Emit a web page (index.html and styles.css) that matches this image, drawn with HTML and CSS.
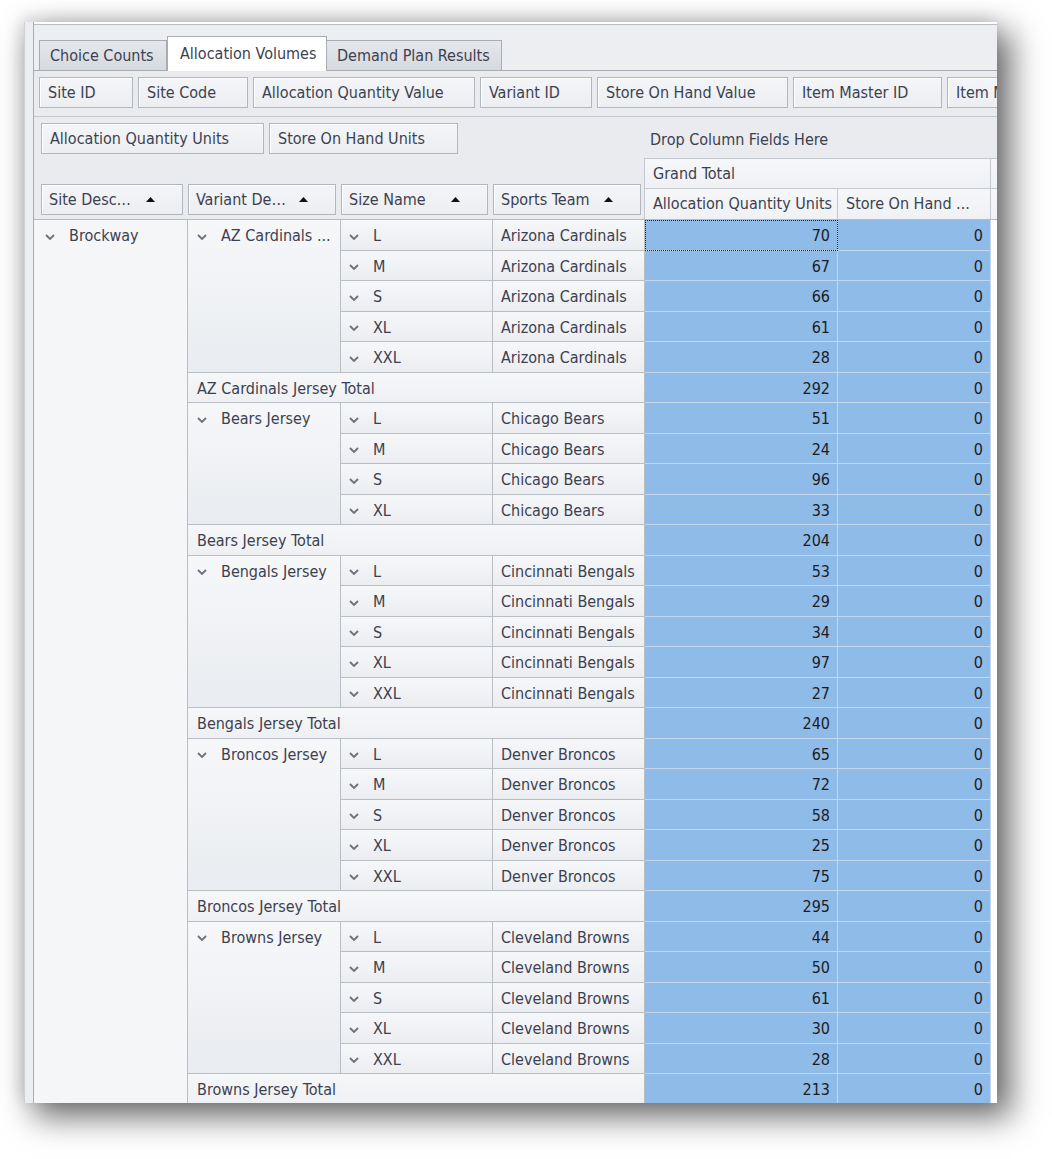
FILE: index.html
```html
<!DOCTYPE html>
<html>
<head>
<meta charset="utf-8">
<title>Allocation Volumes</title>
<link rel="stylesheet" href="styles.css">
</head>
<body>
<div class="window">
  <div class="frame">
    <div class="topbar"></div>
    <div class="tabs">
      <div class="tab t1">Choice Counts</div>
      <div class="tab active t2">Allocation Volumes</div>
      <div class="tab t3">Demand Plan Results</div>
    </div>
    <div class="panel">
      <div class="filter-row">
        <div class="field f-siteid">Site ID</div>
        <div class="field f-sitecode">Site Code</div>
        <div class="field f-aqv">Allocation Quantity Value</div>
        <div class="field f-varid">Variant ID</div>
        <div class="field f-sohv">Store On Hand Value</div>
        <div class="field f-imid">Item Master ID</div>
        <div class="field f-imn">Item Master Name</div>
      </div>
      <div class="pivot-head">
        <div class="head-left">
          <div class="data-fields">
            <div class="field f-aqu">Allocation Quantity Units</div>
            <div class="field f-sohu">Store On Hand Units</div>
          </div>
          <div class="row-fields">
            <div class="field sort f-sd"><span class="lbl">Site Desc…</span><svg class="arrow" width="9" height="5" viewBox="0 0 9 5"><path d="M0 5 L4.5 0 L9 5 Z" fill="#111"/></svg></div>
            <div class="field sort f-vd"><span class="lbl">Variant De…</span><svg class="arrow" width="9" height="5" viewBox="0 0 9 5"><path d="M0 5 L4.5 0 L9 5 Z" fill="#111"/></svg></div>
            <div class="field sort f-sn"><span class="lbl">Size Name</span><svg class="arrow" width="9" height="5" viewBox="0 0 9 5"><path d="M0 5 L4.5 0 L9 5 Z" fill="#111"/></svg></div>
            <div class="field sort f-st"><span class="lbl">Sports Team</span><svg class="arrow" width="9" height="5" viewBox="0 0 9 5"><path d="M0 5 L4.5 0 L9 5 Z" fill="#111"/></svg></div>
          </div>
        </div>
        <div class="head-right">
          <div class="drop">Drop Column Fields Here</div>
          <div class="gt-row"><div class="hcell gt">Grand Total</div><div class="hcell hrest"></div></div>
          <div class="sub-row"><div class="hcell aq">Allocation Quantity Units</div><div class="hcell soh">Store On Hand ...</div><div class="hcell hrest"></div></div>
        </div>
      </div>
      <div class="pivot-body">
        <div class="c site"><svg class="chev" width="10" height="6" viewBox="0 0 10 6"><path d="M1 1 L5 5 L9 1" fill="none" stroke="#6d717a" stroke-width="1.8"/></svg>Brockway</div>

        <div class="c var r5"><svg class="chev" width="10" height="6" viewBox="0 0 10 6"><path d="M1 1 L5 5 L9 1" fill="none" stroke="#6d717a" stroke-width="1.8"/></svg>AZ Cardinals ...</div>
        <div class="c size"><svg class="chev" width="10" height="6" viewBox="0 0 10 6"><path d="M1 1 L5 5 L9 1" fill="none" stroke="#6d717a" stroke-width="1.8"/></svg>L</div><div class="c team">Arizona Cardinals</div><div class="v focus">70</div><div class="v v2">0</div><div class="e"></div>
        <div class="c size"><svg class="chev" width="10" height="6" viewBox="0 0 10 6"><path d="M1 1 L5 5 L9 1" fill="none" stroke="#6d717a" stroke-width="1.8"/></svg>M</div><div class="c team">Arizona Cardinals</div><div class="v">67</div><div class="v v2">0</div><div class="e"></div>
        <div class="c size"><svg class="chev" width="10" height="6" viewBox="0 0 10 6"><path d="M1 1 L5 5 L9 1" fill="none" stroke="#6d717a" stroke-width="1.8"/></svg>S</div><div class="c team">Arizona Cardinals</div><div class="v">66</div><div class="v v2">0</div><div class="e"></div>
        <div class="c size"><svg class="chev" width="10" height="6" viewBox="0 0 10 6"><path d="M1 1 L5 5 L9 1" fill="none" stroke="#6d717a" stroke-width="1.8"/></svg>XL</div><div class="c team">Arizona Cardinals</div><div class="v">61</div><div class="v v2">0</div><div class="e"></div>
        <div class="c size"><svg class="chev" width="10" height="6" viewBox="0 0 10 6"><path d="M1 1 L5 5 L9 1" fill="none" stroke="#6d717a" stroke-width="1.8"/></svg>XXL</div><div class="c team">Arizona Cardinals</div><div class="v">28</div><div class="v v2">0</div><div class="e"></div>
        <div class="c total">AZ Cardinals Jersey Total</div><div class="v">292</div><div class="v v2">0</div><div class="e"></div>

        <div class="c var r4"><svg class="chev" width="10" height="6" viewBox="0 0 10 6"><path d="M1 1 L5 5 L9 1" fill="none" stroke="#6d717a" stroke-width="1.8"/></svg>Bears Jersey</div>
        <div class="c size"><svg class="chev" width="10" height="6" viewBox="0 0 10 6"><path d="M1 1 L5 5 L9 1" fill="none" stroke="#6d717a" stroke-width="1.8"/></svg>L</div><div class="c team">Chicago Bears</div><div class="v">51</div><div class="v v2">0</div><div class="e"></div>
        <div class="c size"><svg class="chev" width="10" height="6" viewBox="0 0 10 6"><path d="M1 1 L5 5 L9 1" fill="none" stroke="#6d717a" stroke-width="1.8"/></svg>M</div><div class="c team">Chicago Bears</div><div class="v">24</div><div class="v v2">0</div><div class="e"></div>
        <div class="c size"><svg class="chev" width="10" height="6" viewBox="0 0 10 6"><path d="M1 1 L5 5 L9 1" fill="none" stroke="#6d717a" stroke-width="1.8"/></svg>S</div><div class="c team">Chicago Bears</div><div class="v">96</div><div class="v v2">0</div><div class="e"></div>
        <div class="c size"><svg class="chev" width="10" height="6" viewBox="0 0 10 6"><path d="M1 1 L5 5 L9 1" fill="none" stroke="#6d717a" stroke-width="1.8"/></svg>XL</div><div class="c team">Chicago Bears</div><div class="v">33</div><div class="v v2">0</div><div class="e"></div>
        <div class="c total">Bears Jersey Total</div><div class="v">204</div><div class="v v2">0</div><div class="e"></div>

        <div class="c var r5"><svg class="chev" width="10" height="6" viewBox="0 0 10 6"><path d="M1 1 L5 5 L9 1" fill="none" stroke="#6d717a" stroke-width="1.8"/></svg>Bengals Jersey</div>
        <div class="c size"><svg class="chev" width="10" height="6" viewBox="0 0 10 6"><path d="M1 1 L5 5 L9 1" fill="none" stroke="#6d717a" stroke-width="1.8"/></svg>L</div><div class="c team">Cincinnati Bengals</div><div class="v">53</div><div class="v v2">0</div><div class="e"></div>
        <div class="c size"><svg class="chev" width="10" height="6" viewBox="0 0 10 6"><path d="M1 1 L5 5 L9 1" fill="none" stroke="#6d717a" stroke-width="1.8"/></svg>M</div><div class="c team">Cincinnati Bengals</div><div class="v">29</div><div class="v v2">0</div><div class="e"></div>
        <div class="c size"><svg class="chev" width="10" height="6" viewBox="0 0 10 6"><path d="M1 1 L5 5 L9 1" fill="none" stroke="#6d717a" stroke-width="1.8"/></svg>S</div><div class="c team">Cincinnati Bengals</div><div class="v">34</div><div class="v v2">0</div><div class="e"></div>
        <div class="c size"><svg class="chev" width="10" height="6" viewBox="0 0 10 6"><path d="M1 1 L5 5 L9 1" fill="none" stroke="#6d717a" stroke-width="1.8"/></svg>XL</div><div class="c team">Cincinnati Bengals</div><div class="v">97</div><div class="v v2">0</div><div class="e"></div>
        <div class="c size"><svg class="chev" width="10" height="6" viewBox="0 0 10 6"><path d="M1 1 L5 5 L9 1" fill="none" stroke="#6d717a" stroke-width="1.8"/></svg>XXL</div><div class="c team">Cincinnati Bengals</div><div class="v">27</div><div class="v v2">0</div><div class="e"></div>
        <div class="c total">Bengals Jersey Total</div><div class="v">240</div><div class="v v2">0</div><div class="e"></div>

        <div class="c var r5"><svg class="chev" width="10" height="6" viewBox="0 0 10 6"><path d="M1 1 L5 5 L9 1" fill="none" stroke="#6d717a" stroke-width="1.8"/></svg>Broncos Jersey</div>
        <div class="c size"><svg class="chev" width="10" height="6" viewBox="0 0 10 6"><path d="M1 1 L5 5 L9 1" fill="none" stroke="#6d717a" stroke-width="1.8"/></svg>L</div><div class="c team">Denver Broncos</div><div class="v">65</div><div class="v v2">0</div><div class="e"></div>
        <div class="c size"><svg class="chev" width="10" height="6" viewBox="0 0 10 6"><path d="M1 1 L5 5 L9 1" fill="none" stroke="#6d717a" stroke-width="1.8"/></svg>M</div><div class="c team">Denver Broncos</div><div class="v">72</div><div class="v v2">0</div><div class="e"></div>
        <div class="c size"><svg class="chev" width="10" height="6" viewBox="0 0 10 6"><path d="M1 1 L5 5 L9 1" fill="none" stroke="#6d717a" stroke-width="1.8"/></svg>S</div><div class="c team">Denver Broncos</div><div class="v">58</div><div class="v v2">0</div><div class="e"></div>
        <div class="c size"><svg class="chev" width="10" height="6" viewBox="0 0 10 6"><path d="M1 1 L5 5 L9 1" fill="none" stroke="#6d717a" stroke-width="1.8"/></svg>XL</div><div class="c team">Denver Broncos</div><div class="v">25</div><div class="v v2">0</div><div class="e"></div>
        <div class="c size"><svg class="chev" width="10" height="6" viewBox="0 0 10 6"><path d="M1 1 L5 5 L9 1" fill="none" stroke="#6d717a" stroke-width="1.8"/></svg>XXL</div><div class="c team">Denver Broncos</div><div class="v">75</div><div class="v v2">0</div><div class="e"></div>
        <div class="c total">Broncos Jersey Total</div><div class="v">295</div><div class="v v2">0</div><div class="e"></div>

        <div class="c var r5"><svg class="chev" width="10" height="6" viewBox="0 0 10 6"><path d="M1 1 L5 5 L9 1" fill="none" stroke="#6d717a" stroke-width="1.8"/></svg>Browns Jersey</div>
        <div class="c size"><svg class="chev" width="10" height="6" viewBox="0 0 10 6"><path d="M1 1 L5 5 L9 1" fill="none" stroke="#6d717a" stroke-width="1.8"/></svg>L</div><div class="c team">Cleveland Browns</div><div class="v">44</div><div class="v v2">0</div><div class="e"></div>
        <div class="c size"><svg class="chev" width="10" height="6" viewBox="0 0 10 6"><path d="M1 1 L5 5 L9 1" fill="none" stroke="#6d717a" stroke-width="1.8"/></svg>M</div><div class="c team">Cleveland Browns</div><div class="v">50</div><div class="v v2">0</div><div class="e"></div>
        <div class="c size"><svg class="chev" width="10" height="6" viewBox="0 0 10 6"><path d="M1 1 L5 5 L9 1" fill="none" stroke="#6d717a" stroke-width="1.8"/></svg>S</div><div class="c team">Cleveland Browns</div><div class="v">61</div><div class="v v2">0</div><div class="e"></div>
        <div class="c size"><svg class="chev" width="10" height="6" viewBox="0 0 10 6"><path d="M1 1 L5 5 L9 1" fill="none" stroke="#6d717a" stroke-width="1.8"/></svg>XL</div><div class="c team">Cleveland Browns</div><div class="v">30</div><div class="v v2">0</div><div class="e"></div>
        <div class="c size"><svg class="chev" width="10" height="6" viewBox="0 0 10 6"><path d="M1 1 L5 5 L9 1" fill="none" stroke="#6d717a" stroke-width="1.8"/></svg>XXL</div><div class="c team">Cleveland Browns</div><div class="v">28</div><div class="v v2">0</div><div class="e"></div>
        <div class="c total">Browns Jersey Total</div><div class="v">213</div><div class="v v2">0</div><div class="e"></div>
      </div>
    </div>
  </div>
</div>
</body>
</html>
```

FILE: styles.css
```css
* {
  box-sizing: border-box;
}

html, body {
  margin: 0;
  background: #ffffff;
}

body {
  height: 1159px;
  overflow: hidden;
  font-family: "DejaVu Sans Condensed", "DejaVu Sans", sans-serif;
  font-stretch: condensed;
  font-size: 16px;
  color: #3c4150;
}

.window {
  margin: 22px 0 0 24px;
  width: 973px;
  height: 1081px;
  background: #eceef2;
  border-left: 1px solid #cdd0d5;
  padding-left: 8px;
  overflow: hidden;
  box-shadow: 12px 12px 30px 2px rgba(0, 0, 0, 0.58), -4px -4px 16px rgba(0, 0, 0, 0.12);
}

.frame {
  height: 100%;
  border-left: 1px solid #a8adb4;
  display: flex;
  flex-direction: column;
}

.topbar {
  height: 3px;
  flex: none;
  background: #ffffff;
  border-bottom: 1px solid #b9bdc4;
}

.tabs {
  flex: none;
  display: flex;
  align-items: flex-end;
  height: 35px;
  margin-top: 11px;
  padding-left: 5px;
  border-bottom: 1px solid #a8adb4;
}

.tab {
  flex: none;
  height: 30px;
  border: 1px solid #a8adb4;
  border-bottom: none;
  background: linear-gradient(#e4e7eb, #d6d9de);
  padding-left: 10px;
  line-height: 30px;
  white-space: nowrap;
}

.t1 { width: 128px; }
.t2 { width: 160px; }
.t3 { width: 176px; margin-left: -1px; }

.tab.active {
  height: 35px;
  margin-bottom: -1px;
  background: #ffffff;
  padding-left: 12px;
  line-height: 34px;
  position: relative;
  z-index: 1;
}

.panel {
  flex: 1;
  background: #e9ebef;
  display: flex;
  flex-direction: column;
  min-height: 0;
}

.filter-row {
  flex: none;
  display: flex;
  gap: 5px;
  height: 46px;
  padding: 6px 0 0 5px;
  border-bottom: 1px solid #c3c7ce;
  overflow: hidden;
}

.field {
  flex: none;
  height: 31px;
  border: 1px solid #b2b6bd;
  background: linear-gradient(#f4f5f8, #eceef2);
  box-shadow: inset 1px 1px 0 #ffffff;
  padding-left: 8px;
  line-height: 30px;
  white-space: nowrap;
  overflow: hidden;
}

.f-siteid { width: 94px; }
.f-sitecode { width: 110px; }
.f-aqv { width: 222px; }
.f-varid { width: 112px; }
.f-sohv { width: 191px; }
.f-imid { width: 149px; }
.f-imn { width: 150px; }

.pivot-head {
  flex: none;
  display: flex;
  height: 102px;
}

.head-left {
  width: 610px;
  padding: 6px 0 0 7px;
}

.data-fields {
  display: flex;
  gap: 5px;
}

.f-aqu { width: 223px; }
.f-sohu { width: 189px; }

.row-fields {
  display: flex;
  gap: 5px;
  margin-top: 30px;
}

.sort {
  display: flex;
  align-items: center;
  padding-left: 7px;
}

.sort .lbl {
  flex: 1;
}

.sort .arrow {
  flex: none;
  margin-right: 27px;
}

.f-sd { width: 142px; }
.f-vd { width: 148px; }
.f-sn { width: 147px; }
.f-st { width: 148px; }

.head-right {
  width: 353px;
  display: flex;
  flex-direction: column;
}

.drop {
  height: 41px;
  line-height: 45px;
  padding-left: 6px;
  white-space: nowrap;
}

.gt-row {
  display: flex;
  height: 31px;
}

.sub-row {
  display: flex;
  height: 30px;
}

.hcell {
  border-right: 1px solid #c3c7ce;
  background: linear-gradient(#f6f7f9, #eff1f4);
  padding-left: 8px;
  line-height: 30px;
  white-space: nowrap;
  overflow: hidden;
}

.gt-row .hcell {
  border-top: 1px solid #c3c7ce;
  border-bottom: 1px solid #c3c7ce;
  line-height: 29px;
}

.gt {
  width: 347px;
  border-left: 1px solid #c3c7ce;
}

.aq {
  width: 194px;
  border-left: 1px solid #c3c7ce;
}

.soh {
  width: 153px;
}

.hrest {
  flex: 1;
  border-right: none;
  padding: 0;
}

.pivot-body {
  flex: none;
  display: grid;
  grid-template-columns: 154px 153px 152px 152px 193px 153px 1fr;
  grid-auto-rows: 30.5px;
  border-top: 1px solid #b5b9c0;
}

.c {
  border-right: 1px solid #b9bdc4;
  border-bottom: 1px solid #b9bdc4;
  background: linear-gradient(#f6f7f9, #ecedf1);
  line-height: 31px;
  white-space: nowrap;
  overflow: hidden;
}

.chev {
  vertical-align: middle;
  margin-right: 14px;
}

.site {
  grid-column: 1;
  grid-row: 1 / span 29;
  background: #f4f6f8;
  padding-left: 11px;
}

.var {
  grid-column: 2;
  padding-left: 9px;
  background: linear-gradient(#f6f7f9, #e9ecf0);
}

.r5 { grid-row: span 5; }
.r4 { grid-row: span 4; }

.size {
  grid-column: 3;
  padding-left: 8px;
}

.team {
  grid-column: 4;
  padding-left: 8px;
}

.total {
  grid-column: 2 / span 3;
  padding-left: 9px;
  background: linear-gradient(#f6f7f9, #eef0f3);
}

.v {
  grid-column: 5;
  background: #8fbbe9;
  border-right: 1px solid #c4d7ed;
  border-bottom: 1px solid #c4d7ed;
  text-align: right;
  padding-right: 7px;
  line-height: 31px;
  color: #1c1d22;
}

.v2 {
  grid-column: 6;
}

.e {
  grid-column: 7;
  background: #ffffff;
}

.focus {
  outline: 1px dotted #222222;
  outline-offset: -1px;
}
```
